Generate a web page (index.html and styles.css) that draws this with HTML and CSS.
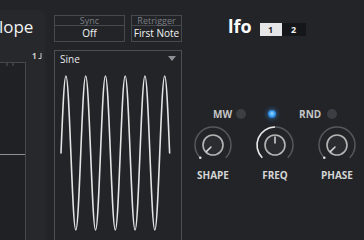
FILE: index.html
```html
<!DOCTYPE html>
<html lang="en">
<head>
  <meta charset="UTF-8" />
  <meta name="viewport" content="width=device-width, initial-scale=1.0" />
  <title>Lfo</title>
  <link rel="stylesheet" href="styles.css">
</head>
<body>
  <div class="rack">

    <section class="env">
      <h2 class="env-title">Envelope</h2>
      <div class="env-mode">1<svg width="4" height="7" viewBox="0 0 4 7"><path d="M3 0V5.5H0.5" fill="none" stroke="#cfcfcf" stroke-width="1"/></svg></div>
      <div class="env-graph">
        <svg class="env-plot" width="26" height="180" viewBox="0 0 26 180">
          <path d="M7 0V3M13 0V3" stroke="#55585d" stroke-width="1"/>
          <path d="M0 91.5H25" stroke="#8d8f93" stroke-width="1"/>
        </svg>
      </div>
    </section>

    <section class="wave">
      <div class="selects">
        <div class="sel sel-sync">
          <div class="sel-label">Sync</div>
          <div class="sel-value">Off</div>
        </div>
        <div class="sel sel-retrig">
          <div class="sel-label">Retrigger</div>
          <div class="sel-value">First Note</div>
        </div>
      </div>

      <div class="wave-box">
        <div class="wave-head">
          <span>Sine</span>
          <span class="caret"></span>
        </div>
        <!-- 5.5 periods, quarter-wave beziers -->
        <svg class="wave-plot" width="126" height="174" viewBox="0 0 126 174">
          <path fill="none" stroke="#e4e4e4" stroke-width="1.6" stroke-linecap="round"
            d="M6 87
               c1.61,-39.45 3.151,-77 4.9375,-77 c1.786,0 3.327,37.55 4.9375,77 c1.61,39.45 3.151,77 4.9375,77 c1.786,0 3.327,-37.55 4.9375,-77
               c1.61,-39.45 3.151,-77 4.9375,-77 c1.786,0 3.327,37.55 4.9375,77 c1.61,39.45 3.151,77 4.9375,77 c1.786,0 3.327,-37.55 4.9375,-77
               c1.61,-39.45 3.151,-77 4.9375,-77 c1.786,0 3.327,37.55 4.9375,77 c1.61,39.45 3.151,77 4.9375,77 c1.786,0 3.327,-37.55 4.9375,-77
               c1.61,-39.45 3.151,-77 4.9375,-77 c1.786,0 3.327,37.55 4.9375,77 c1.61,39.45 3.151,77 4.9375,77 c1.786,0 3.327,-37.55 4.9375,-77
               c1.61,-39.45 3.151,-77 4.9375,-77 c1.786,0 3.327,37.55 4.9375,77 c1.61,39.45 3.151,77 4.9375,77 c1.786,0 3.327,-37.55 4.9375,-77
               c1.61,-39.45 3.151,-77 4.9375,-77 c1.786,0 3.327,37.55 4.9375,77"/>
        </svg>
      </div>
    </section>

    <section class="lfo">
      <div class="lfo-head">
        <h1>lfo</h1>
        <div class="tabs">
          <span class="tab active">1</span>
          <span class="tab">2</span>
        </div>
      </div>

      <div class="leds">
        <span class="led-label">MW</span>
        <span class="led"></span>
        <span class="led on"></span>
        <span class="led-label rnd">RND</span>
        <span class="led"></span>
      </div>

      <div class="knobs">
        <div class="knob">
          <svg width="42" height="42" viewBox="0 0 42 42">
            <path d="M8.27 33.73A18 18 0 1 1 33.73 33.73" fill="none" stroke="#55585d" stroke-width="1.5"/>
            <circle cx="8.27" cy="33.73" r="1.3" fill="#e0e0e0"/>
            <circle cx="21" cy="21" r="10" fill="#2a2c30" stroke="#b4b4b4" stroke-width="1.6"/>
            <path d="M19 23L14.6 27.4" stroke="#d8d8d8" stroke-width="1.5" stroke-linecap="round"/>
          </svg>
          <span class="knob-label">SHAPE</span>
        </div>
        <div class="knob">
          <svg width="42" height="42" viewBox="0 0 42 42">
            <path d="M8.27 33.73A18 18 0 1 1 33.73 33.73" fill="none" stroke="#55585d" stroke-width="1.5"/>
            <path d="M8.27 33.73A18 18 0 0 1 21 3" fill="none" stroke="#e8e8e8" stroke-width="1.5"/>
            <circle cx="21" cy="21" r="10" fill="#2a2c30" stroke="#b4b4b4" stroke-width="1.6"/>
            <path d="M21 19V13" stroke="#d8d8d8" stroke-width="1.5" stroke-linecap="round"/>
          </svg>
          <span class="knob-label">FREQ</span>
        </div>
        <div class="knob">
          <svg width="42" height="42" viewBox="0 0 42 42">
            <path d="M8.27 33.73A18 18 0 1 1 33.73 33.73" fill="none" stroke="#55585d" stroke-width="1.5"/>
            <circle cx="8.27" cy="33.73" r="1.3" fill="#e0e0e0"/>
            <circle cx="21" cy="21" r="10" fill="#2a2c30" stroke="#b4b4b4" stroke-width="1.6"/>
            <path d="M19 23L14.6 27.4" stroke="#d8d8d8" stroke-width="1.5" stroke-linecap="round"/>
          </svg>
          <span class="knob-label">PHASE</span>
        </div>
      </div>
    </section>

  </div>
</body>
</html>
```

FILE: styles.css
```css
body {
  margin: 0;
  padding: 0;
  width: 364px;
  height: 240px;
  overflow: hidden;
  background-color: #222428;
  color: white;
  font-family: "Open Sans", "Noto Sans", sans-serif;
}

.rack {
  display: flex;
  height: 240px;
}

/* envelope (cut off on the left) */
.env {
  width: 45px;
  flex: none;
  margin-top: 10px;
  background-color: #26282c;
  border-top-right-radius: 6px;
  overflow: hidden;
  display: flex;
  flex-direction: column;
}

.env-title {
  margin: 7px 0 0 -39px;
  font-size: 17px;
  font-weight: normal;
  line-height: 20px;
  white-space: nowrap;
  color: #f2f2f2;
}

.env-mode {
  display: flex;
  align-items: flex-end;
  gap: 1px;
  margin: 15px 0 0 32px;
  font-size: 8px;
  line-height: 8px;
  font-weight: bold;
  color: #cfcfcf;
}

.env-graph {
  margin-top: 2px;
  flex: 1;
  width: 25px;
  border-top: 1px solid #45484d;
  border-right: 1px solid #45484d;
  background-color: #1f2125;
}

.env-plot {
  display: block;
}

/* waveform column */
.wave {
  width: 128px;
  flex: none;
  padding-left: 9px;
}

.selects {
  display: flex;
  gap: 6px;
  margin-top: 15px;
}

.sel {
  border: 1px solid #46494e;
  text-align: center;
}

.sel-sync { width: 69px; }
.sel-retrig { width: 49px; }

.sel-label {
  height: 9px;
  line-height: 9px;
  font-size: 9px;
  color: #7b7e83;
  border-bottom: 1px solid #46494e;
}

.sel-value {
  height: 15px;
  line-height: 15px;
  font-size: 10px;
  color: #f4f4f4;
}

.wave-box {
  margin-top: 8px;
  height: 200px;
  border: 1px solid #4c4f54;
  border-bottom: none;
}

.wave-head {
  display: flex;
  justify-content: space-between;
  align-items: center;
  height: 15px;
  padding: 0 5px 0 5px;
  font-size: 10px;
  color: #e8e8e8;
}

.caret {
  width: 0;
  height: 0;
  border-left: 4.5px solid transparent;
  border-right: 4.5px solid transparent;
  border-top: 5px solid #8c8f94;
}

.wave-plot {
  display: block;
}

/* lfo column */
.lfo {
  flex: 1;
}

.lfo-head {
  display: flex;
  align-items: center;
  gap: 8px;
  margin-top: 16px;
  padding-left: 46px;
  height: 20px;
}

.lfo-head h1 {
  margin: 0;
  font-size: 18px;
  line-height: 20px;
  font-weight: bold;
  color: #fafafa;
}

.tabs {
  display: flex;
  margin-top: 6px;
}

.tab {
  width: 24px;
  height: 13px;
  line-height: 13px;
  text-align: center;
  font-size: 9px;
  font-weight: bold;
  background-color: #15161a;
  color: #f0f0f0;
}

.tab.active {
  width: 22px;
  background-color: #e6e6e8;
  color: #26282c;
}

.leds {
  display: flex;
  align-items: center;
  height: 10px;
  margin-top: 73px;
  padding-left: 31px;
}

.led-label {
  font-size: 10px;
  font-weight: bold;
  color: #c6c6c6;
  margin-right: 4px;
}

.led-label.rnd {
  margin-left: 23px;
  margin-right: 6px;
}

.led {
  width: 10px;
  height: 10px;
  border-radius: 50%;
  background-color: #3b3e43;
}

.led.on {
  width: 8px;
  height: 8px;
  margin-left: 22px;
  background: radial-gradient(circle at 50% 45%, #9fdcff 0%, #3a9cf0 45%, #1a5fa8 100%);
  box-shadow: 0 0 4px 1px rgba(60, 150, 240, 0.55);
}

.knobs {
  display: grid;
  grid-template-columns: repeat(3, 62px);
  margin-top: 5px;
}

.knob {
  display: flex;
  flex-direction: column;
  align-items: center;
}

.knob svg {
  display: block;
}

.knob-label {
  margin-top: 2px;
  font-size: 10px;
  font-weight: bold;
  color: #d4d4d4;
}
```
